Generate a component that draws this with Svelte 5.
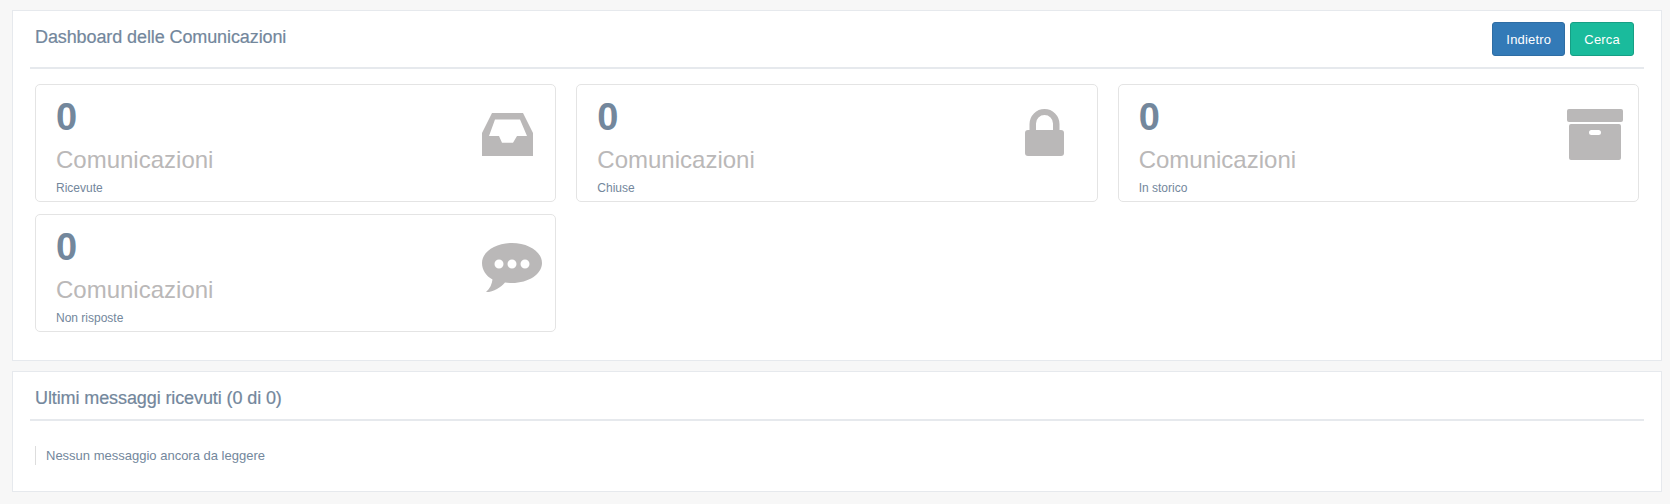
<script>
  const tiles = [
    { label: 'Ricevute', icon: 'inbox' },
    { label: 'Chiuse', icon: 'lock' },
    { label: 'In storico', icon: 'archive' },
    { label: 'Non risposte', icon: 'chat' },
  ];
</script>

<main class="page">
  <section class="panel">
    <header class="panel-title">
      <h2>Dashboard delle Comunicazioni</h2>
      <div class="actions">
        <button type="button" class="btn btn-primary">Indietro</button>
        <button type="button" class="btn btn-success">Cerca</button>
      </div>
    </header>
    <div class="tiles">
      {#each tiles as tile (tile.label)}
        <div class="tile">
          <div class="tile-text">
            <div class="count">0</div>
            <h3>Comunicazioni</h3>
            <p>{tile.label}</p>
          </div>
          {#if tile.icon === 'inbox'}
            <svg class="icon inbox" width="51" height="43" viewBox="0 0 51 43" aria-hidden="true">
              <path fill-rule="evenodd" d="M10 0H41L51 20V43H0V20ZM13 6.5L7 23H17L20 29.7H31L35 23H45L38 6.5Z" />
            </svg>
          {:else if tile.icon === 'lock'}
            <svg class="icon lock" width="39" height="47" viewBox="0 0 39 47" aria-hidden="true">
              <path d="M4.5 21V15a15 15 0 0 1 30 0V21H28V14.5a8.5 8.5 0 0 0-17 0V21Z" />
              <rect y="21" width="39" height="26" rx="3" />
            </svg>
          {:else if tile.icon === 'archive'}
            <svg class="icon archive" width="56" height="51" viewBox="0 0 56 51" aria-hidden="true">
              <rect width="56" height="13" rx="2" />
              <path fill-rule="evenodd" d="M4 15H52a2 2 0 0 1 2 2V49a2 2 0 0 1-2 2H4a2 2 0 0 1-2-2V17a2 2 0 0 1 2-2ZM24.5 21a2.500 2.500 0 0 0 0 5h7a2.500 2.500 0 0 0 0-5Z" />
            </svg>
          {:else}
            <svg class="icon chat" width="60" height="49" viewBox="0 0 60 49" aria-hidden="true">
              <path fill-rule="evenodd" d="M30 0C46.600 0 60 9 60 20S46.600 40 30 40C27.500 40 25 39.800 23 39.400C19 44 12 49 4 49C8 45.500 10 41 10.500 36.500C4 33 0 27 0 20C0 9 13.400 0 30 0ZM17 16.500a4.500 4.500 0 1 0 0 9a4.500 4.500 0 1 0 0-9ZM30 16.500a4.500 4.500 0 1 0 0 9a4.500 4.500 0 1 0 0-9ZM43 16.500a4.500 4.500 0 1 0 0 9a4.500 4.500 0 1 0 0-9Z" />
            </svg>
          {/if}
        </div>
      {/each}
    </div>
  </section>

  <section class="panel messages">
    <header class="panel-title">
      <h2>Ultimi messaggi ricevuti (0 di 0)</h2>
    </header>
    <blockquote>Nessun messaggio ancora da leggere</blockquote>
  </section>
</main>

<style>
  :global(body) {
    margin: 0;
    background: #f7f7f7;
    color: #73879c;
    font-family: "Liberation Sans", Arial, sans-serif;
  }

  .page {
    padding: 10px 8px 0 12px;
    display: flex;
    flex-direction: column;
    gap: 10px;
  }

  .panel {
    background: #fff;
    border: 1px solid #e6e9ed;
    padding: 0 17px;
    height: 351px;
    box-sizing: border-box;
  }

  .panel.messages { height: 121px; }

  .panel-title {
    display: flex;
    justify-content: space-between;
    align-items: flex-start;
    height: 58px;
    box-sizing: border-box;
    border-bottom: 2px solid #e6e9ed;
    padding: 11px 10px 0 5px;
  }

  .messages .panel-title { height: 49px; }

  h2 {
    margin: 1px 0 0;
    font-size: 18px;
    font-weight: 400;
    line-height: 28px;
    letter-spacing: -0.1px;
    -webkit-text-stroke: 0.2px #73879c;
  }

  .actions { display: flex; gap: 5px; }

  .btn {
    height: 34px;
    padding: 0 13px;
    border: 1px solid transparent;
    border-radius: 3px;
    color: #fff;
    font: 13px "Liberation Sans", Arial, sans-serif;
    letter-spacing: 0.2px;
  }

  .btn-primary { background: #337ab7; border-color: #2e6da4; }
  .btn-success { background: #1abb9c; border-color: #169f85; }

  .tiles {
    display: grid;
    grid-template-columns: repeat(3, 1fr);
    column-gap: 20px;
    row-gap: 12px;
    padding: 15px 5px 0;
  }

  .tile {
    display: flex;
    justify-content: space-between;
    align-items: flex-start;
    height: 118px;
    box-sizing: border-box;
    border: 1px solid #e4e4e4;
    border-radius: 5px;
    padding: 0 12px 0 20px;
  }

  .count {
    font-size: 38px;
    font-weight: 700;
    line-height: 44px;
    margin-top: 10px;
  }

  h3 {
    margin: 7px 0 0;
    color: #bab8b8;
    font-size: 24px;
    font-weight: 400;
    line-height: 28px;
  }

  p {
    margin: 7px 0 0;
    font-size: 12px;
    line-height: 14px;
  }

  .icon { fill: #bab8b8; flex-shrink: 0; }
  .inbox { margin: 28px 10px 0 0; }
  .lock { margin: 24px 21px 0 0; }
  .archive { margin: 24px 3px 0 0; }
  .chat { margin: 28px 1px 0 0; }

  blockquote {
    margin: 25px 0 0 5px;
    padding: 0 0 0 10px;
    border-left: 1px solid #ddd;
    font-size: 13px;
    line-height: 19px;
  }
</style>
